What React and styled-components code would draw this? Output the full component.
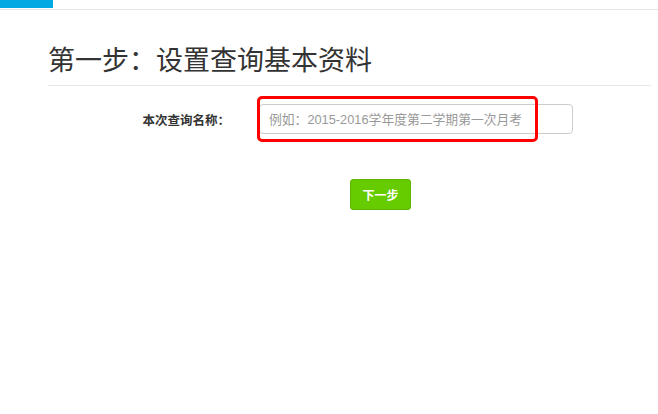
import styled, { createGlobalStyle } from "styled-components";

const GlobalStyle = createGlobalStyle`
  html, body {
    margin: 0;
    padding: 0;
    background: #fff;
    font-family: "Liberation Sans", "Noto Sans CJK SC", sans-serif;
    color: #333;
  }
`;

const TopBar = styled.div`
  height: 9px;
  border-bottom: 1px solid #e3e3e3;
`;

const ActiveTab = styled.div`
  width: 53px;
  height: 8px;
  background: #02a9e2;
`;

const Container = styled.div`
  padding: 0 7px 0 48px;
`;

const Heading = styled.h1`
  margin: 0;
  padding: 29px 0 0;
  height: 46px;
  box-sizing: content-box;
  font-family: "Noto Sans CJK SC", sans-serif;
  font-size: 27px;
  font-weight: 400;
  line-height: 40px;
  color: #333;
  border-bottom: 1px solid #e8e8e8;
`;

const FormRow = styled.div`
  display: flex;
  align-items: center;
  margin-top: 18px;
`;

const Label = styled.label`
  width: 182px;
  text-align: right;
  font-family: "Noto Sans CJK SC", sans-serif;
  font-size: 12.5px;
  font-weight: 700;
  color: #333;
`;

const InputWrap = styled.div`
  position: relative;
  margin-left: 29px;
`;

const TextInput = styled.input`
  display: block;
  width: 314px;
  height: 30px;
  box-sizing: border-box;
  padding: 0 9px;
  border: 1px solid #ccc;
  border-radius: 4px;
  font-family: "Liberation Sans", "Noto Sans CJK SC", sans-serif;
  font-size: 12.8px;
  color: #555;
  outline: none;
  &::placeholder {
    color: #999;
  }
`;

const Highlight = styled.div`
  position: absolute;
  left: -2px;
  top: -8px;
  width: 281px;
  height: 46px;
  box-sizing: border-box;
  border: 3px solid #ff0000;
  border-radius: 5px;
  pointer-events: none;
`;

const ButtonRow = styled.div`
  display: flex;
  margin-top: 45px;
  padding-left: 302px;
`;

const NextButton = styled.button`
  width: 61px;
  height: 31px;
  padding: 0;
  border: 1px solid #5cb500;
  border-radius: 3px;
  background: #66cc00;
  color: #fff;
  font-family: "Noto Sans CJK SC", sans-serif;
  font-size: 12px;
  font-weight: 700;
  cursor: pointer;
`;

export default function App() {
  return (
    <>
      <GlobalStyle />
      <TopBar>
        <ActiveTab />
      </TopBar>
      <Container>
        <Heading>第一步：设置查询基本资料</Heading>
        <FormRow>
          <Label>本次查询名称：</Label>
          <InputWrap>
            <TextInput placeholder="例如：2015-2016学年度第二学期第一次月考" />
            <Highlight />
          </InputWrap>
        </FormRow>
        <ButtonRow>
          <NextButton>下一步</NextButton>
        </ButtonRow>
      </Container>
    </>
  );
}
